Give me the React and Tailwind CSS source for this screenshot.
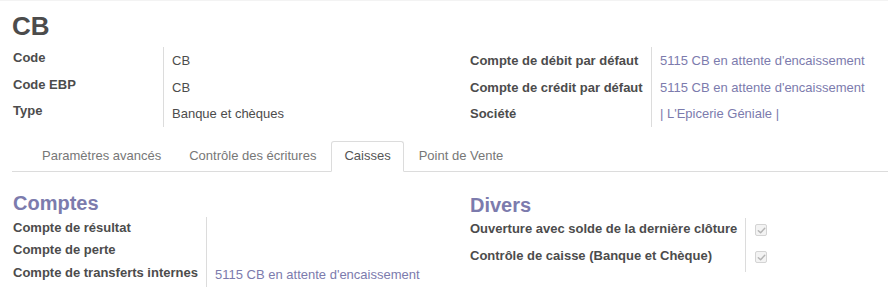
import React from 'react';

const FONT = { fontFamily: '"Liberation Sans", Arial, sans-serif' };

// --- small bits ---
const Link = ({ children }) => <span className="text-[#7c7bad]">{children}</span>;

const CheckBox = () => (
  <span className="flex w-[12px] h-[12px] items-center justify-center rounded-[2px] border border-[#d4d4d4] bg-[#f3f3f3]">
    <svg width="9" height="9" viewBox="0 0 10 10" fill="none">
      <path d="M1.5 5.2 L4 7.5 L8.6 2.6" stroke="#b4b4b4" strokeWidth="1.6" strokeLinecap="round" strokeLinejoin="round" />
    </svg>
  </span>
);

// one row of a label / value group
const Row = ({ label, labelW, h, vpt = 'pt-[5px]', children }) => (
  <div className="flex" style={{ height: h }}>
    <div className={`shrink-0 pt-[2px] font-bold text-[#4c4c4c] ${labelW}`}>{label}</div>
    <div className={`flex-1 border-l border-[#dcdcdc] pl-2 ${vpt}`}>{children}</div>
  </div>
);

const TABS = ['Paramètres avancés', 'Contrôle des écritures', 'Caisses', 'Point de Vente'];

export default function App() {
  return (
    <div className="w-[888px] h-[294px] overflow-hidden bg-white border-t border-[#f3f3f3] px-3 text-[13px] leading-[18px] text-[#4c4c4c]" style={FONT}>
      <h1 className="mt-[10px] text-[26px] leading-[30px] font-bold">CB</h1>

      {/* main fields */}
      <div className="mt-[6px] pl-px grid grid-cols-[457px_1fr]">
        <div>
          <Row label="Code" labelW="w-[150px]" h={26.5}>CB</Row>
          <Row label="Code EBP" labelW="w-[150px]" h={26.5}>CB</Row>
          <Row label="Type" labelW="w-[150px]" h={27}>Banque et chèques</Row>
        </div>
        <div>
          <Row label="Compte de débit par défaut" labelW="w-[181px] pt-[5px]" h={26.5}><Link>5115 CB en attente d'encaissement</Link></Row>
          <Row label="Compte de crédit par défaut" labelW="w-[181px] pt-[5px]" h={26.5}><Link>5115 CB en attente d'encaissement</Link></Row>
          <Row label="Société" labelW="w-[181px] pt-[5px]" h={27} vpt="pt-[5px]"><Link>| L'Epicerie Géniale |</Link></Row>
        </div>
      </div>

      {/* notebook tabs */}
      <div className="mt-[14px] -mr-3 flex border-b border-[#dcdcdc] pl-[17px]">
        {TABS.map((t) => {
          const active = t === 'Caisses';
          return (
            <div
              key={t}
              className={`-mb-px mr-[2px] rounded-t-[3px] border px-3 pt-[5px] pb-[6px] ${
                active ? 'border-[#dcdcdc] border-b-white bg-white text-[#555]' : 'border-transparent text-[#777]'
              }`}
            >
              {t}
            </div>
          );
        })}
      </div>

      {/* tab content */}
      <div className="mt-[19px] pl-px grid grid-cols-[457px_1fr]">
        <div>
          <h2 className="text-[20px] leading-[24px] font-bold text-[#7c7bad]">Comptes</h2>
          <div className="mt-[2px]">
            <Row label="Compte de résultat" labelW="w-[193px]" h={22}></Row>
            <Row label="Compte de perte" labelW="w-[193px]" h={23}></Row>
            <Row label="Compte de transferts internes" labelW="w-[193px]" h={25} vpt="pt-[4px]"><Link>5115 CB en attente d'encaissement</Link></Row>
          </div>
        </div>
        <div className="pt-[2px]">
          <h2 className="text-[20px] leading-[24px] font-bold text-[#7c7bad]">Divers</h2>
          <div className="mt-[1px]">
            <Row label="Ouverture avec solde de la dernière clôture" labelW="w-[275px]" h={27} vpt="pt-[6px] pl-[9px]"><CheckBox /></Row>
            <Row label="Contrôle de caisse (Banque et Chèque)" labelW="w-[275px]" h={27} vpt="pt-[6px] pl-[9px]"><CheckBox /></Row>
          </div>
        </div>
      </div>
    </div>
  );
}
